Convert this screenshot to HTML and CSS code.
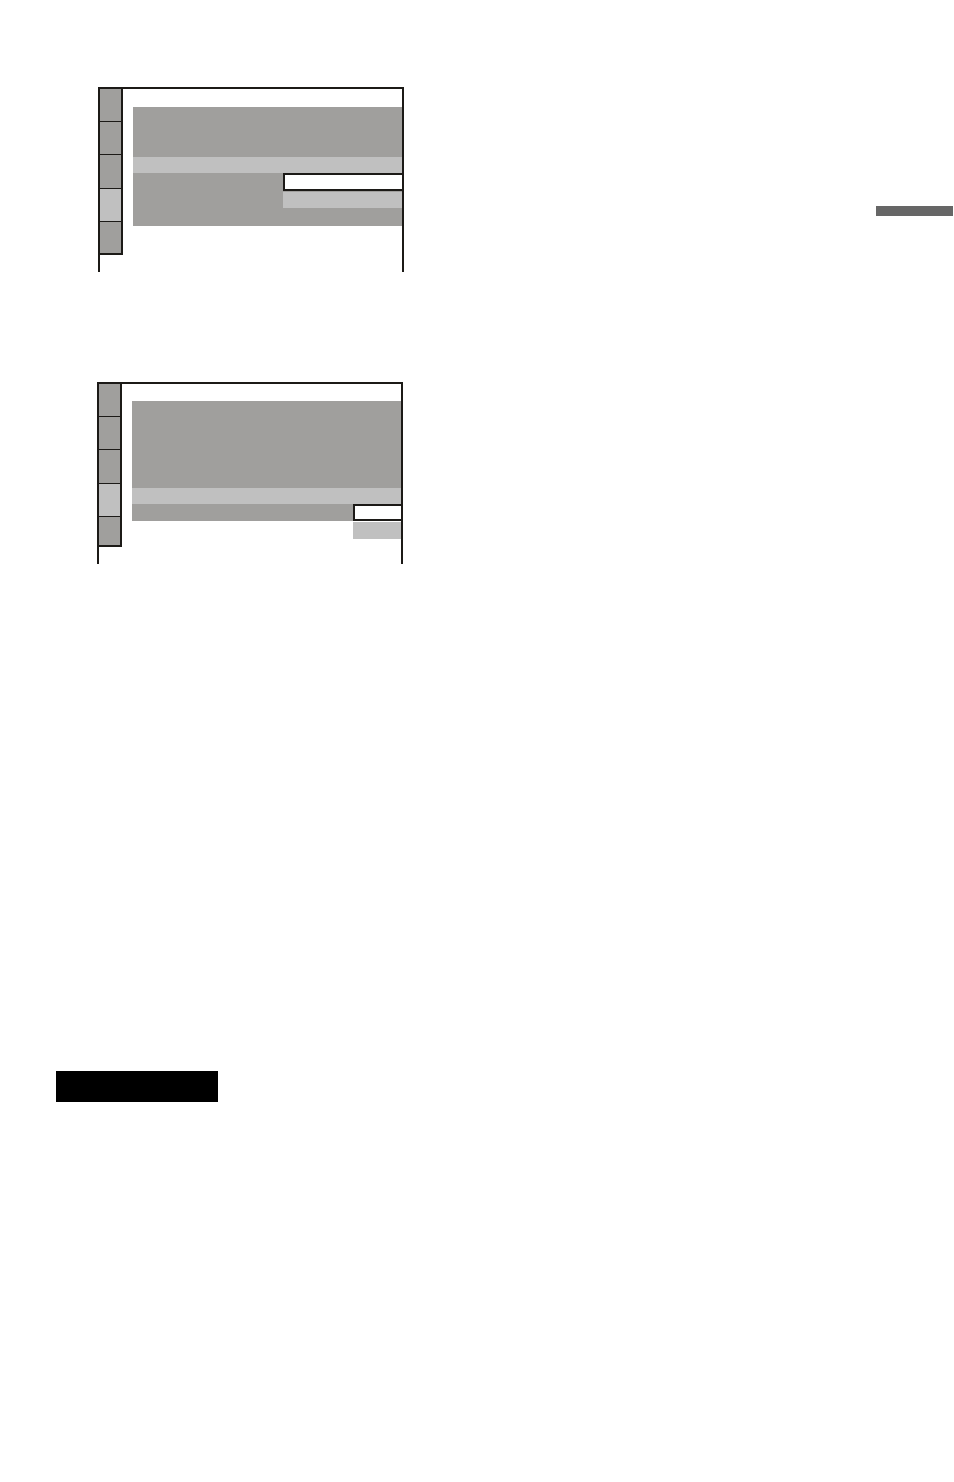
FILE: index.html
```html
<!DOCTYPE html>
<html lang="en">
<head>
<meta charset="utf-8">
<title>Setup display</title>
<link rel="stylesheet" href="styles.css">
</head>
<body>
<div class="page">
  <main class="main">
    <div class="fig fig1">
      <div class="tabs">
        <div class="tab"></div>
        <div class="tab"></div>
        <div class="tab tab-tall"></div>
        <div class="tab tab-active"></div>
        <div class="tab tab-last1"></div>
      </div>
      <div class="panel">
        <div class="p1-top"></div>
        <div class="band"></div>
        <div class="p1-row">
          <div class="p1-spacer"></div>
          <div class="p1-opts">
            <div class="opt-sel p1-sel"></div>
            <div class="opt p1-opt"></div>
          </div>
        </div>
      </div>
    </div>

    <div class="fig fig2">
      <div class="tabs">
        <div class="tab"></div>
        <div class="tab"></div>
        <div class="tab tab-tall"></div>
        <div class="tab tab-active"></div>
        <div class="tab tab-last2"></div>
      </div>
      <div class="panel panel2">
        <div class="p2-top"></div>
        <div class="band"></div>
        <div class="p2-row">
          <div class="p2-item"></div>
          <div class="p2-opts">
            <div class="opt-sel p2-sel"></div>
            <div class="opt p2-opt"></div>
          </div>
        </div>
      </div>
    </div>

    <div class="note-bar"></div>
  </main>
  <aside class="side">
    <div class="thumb"></div>
  </aside>
</div>
</body>
</html>
```

FILE: styles.css
```css
html, body {
  margin: 0;
  padding: 0;
  background: #ffffff;
  font-family: "Liberation Sans", Arial, sans-serif;
}

.page {
  width: 954px;
  height: 1482px;
  display: flex;
  align-items: flex-start;
}

.main {
  flex: 1;
  display: flex;
  flex-direction: column;
  align-items: flex-start;
}

.side {
  flex: none;
  width: 78px;
}

.thumb {
  margin-top: 206px;
  width: 77px;
  height: 10px;
  background: #666666;
}

/* figures */
.fig {
  box-sizing: border-box;
  width: 306px;
  border: 2px solid #1c1a17;
  border-bottom: 0;
  display: flex;
  align-items: flex-start;
}

.fig1 {
  margin: 87px 0 0 98px;
  height: 185px;
}

.fig2 {
  margin: 110px 0 0 97px;
  height: 182px;
}

.tabs {
  box-sizing: border-box;
  flex: none;
  width: 23px;
  border-right: 2px solid #1c1a17;
  border-bottom: 2px solid #1c1a17;
  display: flex;
  flex-direction: column;
}

.tab {
  height: 32px;
  background: #a09f9d;
  border-bottom: 1px solid #1c1a17;
}

.tab-tall { height: 33px; }
.tab-active { background: #c0c0c0; }
.tab-last1 { height: 31px; border-bottom: 0; }
.tab-last2 { height: 28px; border-bottom: 0; }

.panel {
  flex: 1;
  margin: 18px 0 0 10px;
  display: flex;
  flex-direction: column;
}

.panel2 {
  margin-top: 17px;
}

.band {
  height: 16px;
  background: #c0c0c0;
}

/* figure 1 */
.p1-top {
  height: 50px;
  background: #a09f9d;
}

.p1-row {
  height: 53px;
  background: #a09f9d;
  display: flex;
}

.p1-spacer { flex: 1; }

.p1-opts {
  width: 119px;
  display: flex;
  flex-direction: column;
}

.opt-sel {
  box-sizing: border-box;
  background: #ffffff;
  border: 2px solid #1c1a17;
  border-right: 0;
}

.opt {
  background: #c0c0c0;
}

.p1-sel { height: 18px; }
.p1-opt { height: 16px; margin-top: 1px; }

/* figure 2 */
.p2-top {
  height: 87px;
  background: #a09f9d;
}

.p2-row {
  display: flex;
  align-items: flex-start;
}

.p2-item {
  flex: 1;
  height: 17px;
  background: #a09f9d;
}

.p2-opts {
  width: 48px;
  display: flex;
  flex-direction: column;
}

.p2-sel { height: 17px; }
.p2-opt { height: 17px; margin-top: 1px; }

/* note heading bar */
.note-bar {
  margin: 507px 0 0 56px;
  width: 162px;
  height: 31px;
  background: #000000;
}
```
